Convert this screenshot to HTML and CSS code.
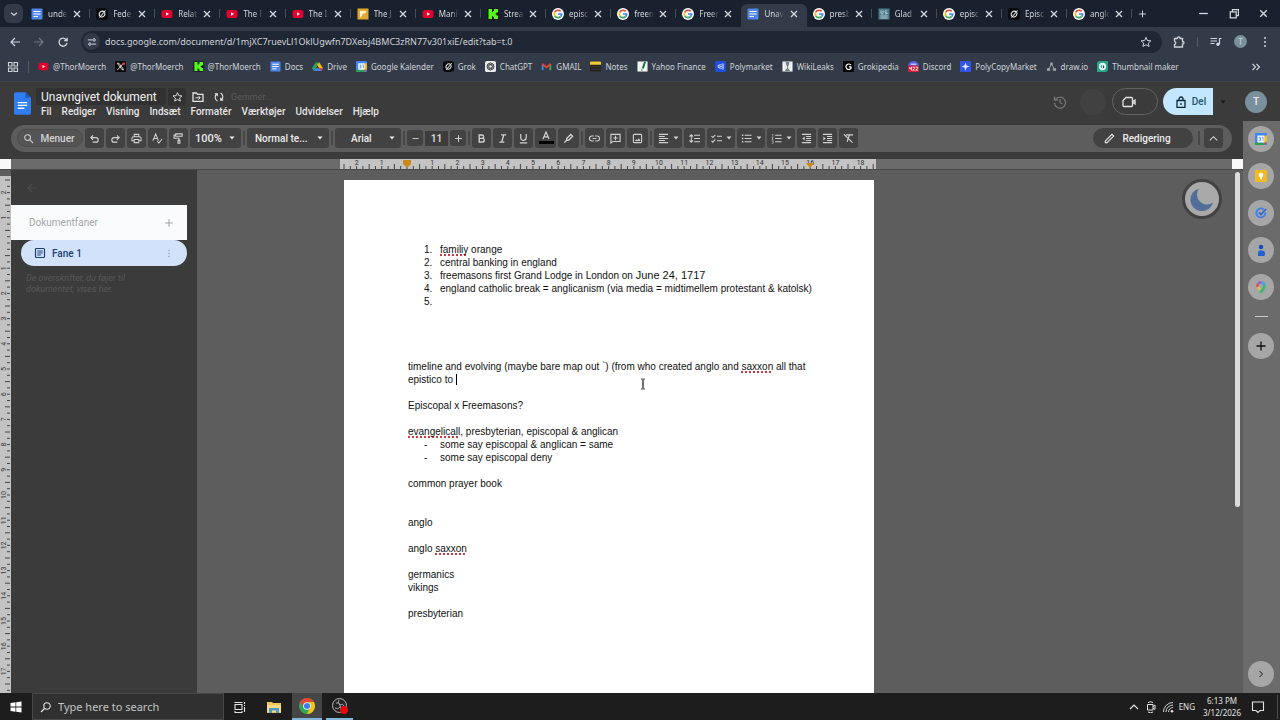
FILE: index.html
```html
<!DOCTYPE html>
<html lang="da">
<head>
  <meta charset="UTF-8" />
  <meta name="viewport" content="width=device-width, initial-scale=1.0" />
  <title>Unavngivet dokument</title>
  <link rel="stylesheet" href="styles.css">
</head>
<body>
  <svg class="sprite" aria-hidden="true">
    <symbol id="docs" viewBox="0 0 12 12"><rect x=".5" y=".5" width="11" height="11" rx="1" fill="#4f86e8"/><path d="M2.500 3.500h7M2.500 6h7M2.500 8.500h4.500" stroke="#fff" stroke-width="1.200"/></symbol>
    <symbol id="grok" viewBox="0 0 12 12"><rect width="12" height="12" rx="3" fill="#080a0c"/><path d="M8.300 3.800A3.200 3.200 0 0 0 3.800 8.200M4.200 8.500A3.200 3.200 0 0 0 8.700 4.500M3.500 9.500l6-7" fill="none" stroke="#e4e6e8" stroke-width="1.100"/></symbol>
    <symbol id="yt" viewBox="0 0 12 12"><rect x=".5" y="2" width="11" height="8" rx="2" fill="#e0032f"/><path d="M5 4.300v3.400L8 6z" fill="#fff"/></symbol>
    <symbol id="flag" viewBox="0 0 12 12"><rect x=".5" y=".5" width="11" height="11" fill="#e3a92d"/><path d="M3 10V3h6.500L8 5.500H5.500V7z" fill="#fff3d0"/></symbol>
    <symbol id="kick" viewBox="0 0 12 12"><rect x=".5" y=".5" width="11" height="11" fill="#0b120b"/><path d="M1.500 1h3.500v3h1V3h1V1h4v3.500H9.500v1h-1v1h1v1H11V11H7V9H6V8H5v3H1.500z" fill="#53fc18"/></symbol>
    <symbol id="google" viewBox="0 0 12 12"><circle cx="6" cy="6" r="6" fill="#fff"/><g fill="none" stroke-width="1.700"><path d="M8.600 3.300A3.700 3.700 0 0 0 2.800 4.100" stroke="#ea4335"/><path d="M2.800 4.100a3.700 3.700 0 0 0 0 3.800" stroke="#fbbc05"/><path d="M2.800 7.900a3.700 3.700 0 0 0 5.700.8" stroke="#34a853"/><path d="M6 6h3.700a3.700 3.700 0 0 1-1.200 2.700" stroke="#4285f4"/></g></symbol>
    <symbol id="us" viewBox="0 0 12 12"><rect x=".5" y=".5" width="11" height="11" fill="#4d7d8b"/><path d="M3 2.500v3q1 1.500 2 0v-3M9 3q-2-1-2 .5t2 1.500-2 1.200M2.500 8h7M2.500 10h7" fill="none" stroke="#c9dde2" stroke-width=".8"/></symbol>
    <symbol id="x" viewBox="0 0 12 12"><rect width="12" height="12" rx="1" fill="#0a0a0a"/><path d="M2.500 2.500h1.800l5.200 7H7.700z" fill="none" stroke="#ddd"/><path d="M9.500 2 2.500 10" stroke="#ddd"/><circle cx="9.500" cy="3" r="1.500" fill="#d3343c"/></symbol>
    <symbol id="drive" viewBox="0 0 12 12"><path d="M4 1.500h4L6 5z" fill="#34a853"/><path d="M4 1.500 0 8l2 3 4-6z" fill="#2fa35c"/><path d="m8 1.500 4 6.500H8L5.500 4z" fill="#fbbc05"/><path d="M12 8 10 11H2l2-3z" fill="#4285f4"/><path d="M8 8h4l-2 3z" fill="#ea4335"/></symbol>
    <symbol id="cal" viewBox="0 0 12 12"><rect width="12" height="12" rx="1" fill="#4285f4"/><path d="M9.500 2.500H12v7H9.500z" fill="#fbbc04"/><path d="M0 9.500h9.500V12H1a1 1 0 0 1-1-1z" fill="#2ea052"/><path d="M9.500 9.500H12L9.500 12z" fill="#ea4335"/><path d="M2.500 2.500h7v7h-7z" fill="#fff"/><path d="M3.700 4.300h1.700v3.500H3.700M4 6h1.400M7 4.500l1-.4v3.900" fill="none" stroke="#4285f4" stroke-width=".8"/></symbol>
    <symbol id="gpt" viewBox="0 0 12 12"><rect width="12" height="12" rx="2" fill="#e9ebec"/><g fill="none" stroke="#444" stroke-width=".8"><circle cx="6" cy="6" r="3.800"/><ellipse cx="6" cy="6" rx="4" ry="1.800" transform="rotate(30 6 6)"/><ellipse cx="6" cy="6" rx="4" ry="1.800" transform="rotate(-30 6 6)"/><ellipse cx="6" cy="6" rx="1.800" ry="4"/></g></symbol>
    <symbol id="gmail" viewBox="0 0 12 12"><path d="M1.800 10V4" stroke="#4285f4" stroke-width="2"/><path d="M10.200 10V4" stroke="#34a853" stroke-width="2"/><path d="m1.300 3 4.700 4 4.700-4" fill="none" stroke="#ea4335" stroke-width="2"/></symbol>
    <symbol id="notes" viewBox="0 0 12 12"><rect y=".5" width="12" height="11" rx="1" fill="#25241f"/><path d="M0 4V1.500q0-1 1-1h10q1 0 1 1V4z" fill="#f4ca35"/><path d="M1 6.500h10M1 9h10" stroke="#484842" stroke-width=".6"/></symbol>
    <symbol id="yahoo" viewBox="0 0 12 12"><path d="M.5.500h11v11H.5z" fill="#f2f5f2"/><path d="M8.800 1 6.300 8M4.800 9.500h1" stroke="#146b35" stroke-width="2"/></symbol>
    <symbol id="poly" viewBox="0 0 12 12"><rect width="12" height="12" rx="2" fill="#1f4fda"/><path d="m9 3-5.500 1.800v2.400L9 9zM3.500 4.800 9 7M3.500 7.200 9 5" fill="none" stroke="#dbe4ff" stroke-width=".8"/></symbol>
    <symbol id="wiki" viewBox="0 0 12 12"><path d="M.5.500h11v11H.5z" fill="#e8ecec"/><path d="M4 1h4L7.500 4 6.500 6v2L9 11H3l2.500-3V6L4.500 4z" fill="#708184"/><path d="M1 1v8l2 2zM11 1v8l-2 2z" fill="#fff"/></symbol>
    <symbol id="grokipedia" viewBox="0 0 12 12"><path d="M0 0h12v12H0z" fill="#060606"/><path d="M8.700 4.500A3 3 0 1 0 8.700 8V6.500H6.500" fill="none" stroke="#fff" stroke-width="1.300"/></symbol>
    <symbol id="discord" viewBox="0 0 12 12"><circle cx="6" cy="6" r="6" fill="#5463e8"/><path d="M3 3.500h6" stroke="#fff"/><rect y="5" width="12" height="7" rx="1" fill="#d51c39"/><path d="M2 6.500v2h2M3.700 6.300v4M5 6.700h2v1.600L5 10h2.200M8.300 6.700h2v1.600L8.300 10h2.500" fill="none" stroke="#fff" stroke-width=".9"/></symbol>
    <symbol id="spark" viewBox="0 0 12 12"><rect width="12" height="12" rx="1" fill="#3454e5"/><path d="m6 1.500 1.200 3.300L10.500 6 7.200 7.200 6 10.500 4.800 7.200 1.500 6l3.300-1.200z" fill="#dfe6ff"/></symbol>
    <symbol id="drawio" viewBox="0 0 12 12"><path d="M6 3 3 9M6 3l3 6" stroke="#a2a6ab"/><path d="M4.700 1.500h2.600v3H4.700zM1 8h3.500v2.500H1zM7.500 8H11v2.500H7.500z" fill="#a2a6ab"/></symbol>
    <symbol id="thumb" viewBox="0 0 12 12"><path d="M2 0h10v10l-2 2H0V2z" fill="#2aa386"/><circle cx="6" cy="6" r="3" fill="none" stroke="#e8fff8" stroke-width="2"/><path d="M6 4v4h2" stroke="#e8fff8"/></symbol>
    <symbol id="close" viewBox="0 0 12 12"><path d="m3 3 6 6M9 3 3 9" stroke="currentColor" stroke-width="1.300"/></symbol>
    <symbol id="plus" viewBox="0 0 12 12"><path d="M6 1.500v9M1.500 6h9" stroke="currentColor" stroke-width="1.300"/></symbol>
    <symbol id="minus" viewBox="0 0 12 12"><path d="M2 6h8" stroke="currentColor" stroke-width="1.200"/></symbol>
    <symbol id="down" viewBox="0 0 12 12"><path d="m2.500 4.500 3.500 3 3.500-3" fill="none" stroke="currentColor" stroke-width="1.500"/></symbol>
    <symbol id="up" viewBox="0 0 12 12"><path d="m2 8 4-4 4 4" fill="none" stroke="currentColor" stroke-width="1.200"/></symbol>
    <symbol id="right" viewBox="0 0 12 12"><path d="m4.500 3 3 3-3 3" fill="none" stroke="currentColor"/></symbol>
    <symbol id="caret" viewBox="0 0 6 6"><path d="M.5 1.500h5L3 4.500z" fill="currentColor"/></symbol>
    <symbol id="back" viewBox="0 0 12 12"><path d="M11 6H2M6 2 2 6l4 4" fill="none" stroke="currentColor" stroke-width="1.200"/></symbol>
    <symbol id="reload" viewBox="0 0 12 12"><path d="M9.700 4.500A4 4 0 1 0 10 7M10.200 1.700v3H7.200" fill="none" stroke="currentColor" stroke-width="1.300"/></symbol>
    <symbol id="tune" viewBox="0 0 12 12"><g fill="none" stroke="currentColor" stroke-width="1.200"><path d="M1 3.500h5M6 8.500h5"/><circle cx="8.500" cy="3.500" r="1.500"/><circle cx="3.500" cy="8.500" r="1.500"/></g></symbol>
    <symbol id="star" viewBox="0 0 12 12"><path d="m6 1.300 1.400 3.200 3.500.3-2.600 2.300.8 3.400L6 8.700l-3.100 1.800.8-3.400L1.100 4.800l3.500-.3z" fill="none" stroke="currentColor"/></symbol>
    <symbol id="puzzle" viewBox="0 0 12 12"><path d="M1.500 2.500h2.700q0-1.500 1.500-1.500t1.500 1.500H9.500V5.500q1.500 0 1.500 1.300T9.500 8.200V11h-8V8.500q1.300-.2 1.300-1.600T1.500 5.300z" fill="none" stroke="currentColor" stroke-width="1.300"/></symbol>
    <symbol id="queue" viewBox="0 0 12 12"><path d="M.5 2.500h6.500M.5 5h6.500M.5 7.500h4M9.500 8V2.500h2" fill="none" stroke="currentColor" stroke-width="1.200"/><circle cx="8" cy="8.300" r="1.700" fill="currentColor"/></symbol>
    <symbol id="dots" viewBox="0 0 12 12"><g fill="currentColor"><circle cx="6" cy="2" r="1"/><circle cx="6" cy="6" r="1"/><circle cx="6" cy="10" r="1"/></g></symbol>
    <symbol id="apps" viewBox="0 0 12 12"><path d="M1.500 1.500H5V5H1.500zM7 1.500h3.500V5H7zM1.500 7H5v3.500H1.500zM7 7h3.500v3.500H7z" fill="none" stroke="currentColor" stroke-width="1.100"/></symbol>
    <symbol id="max" viewBox="0 0 12 12"><path d="M3 4.500h5.500V10H3zM5 4.500v-2h5.500V8h-2" fill="none" stroke="currentColor" stroke-width="1.100"/></symbol>
    <symbol id="more" viewBox="0 0 12 12"><path d="m2.500 3 3 3-3 3M6.500 3l3 3-3 3" fill="none" stroke="currentColor" stroke-width="1.100"/></symbol>
    <symbol id="folder" viewBox="0 0 12 12"><path d="M1 2h3.500l1 1.300H11v7H1z" fill="none" stroke="currentColor" stroke-width="1.300"/><path d="M3.500 6.800H8M6.500 5 8.200 6.800 6.500 8.500" fill="none" stroke="currentColor"/></symbol>
    <symbol id="sync" viewBox="0 0 12 12"><path d="M4.500 10A4.200 4.200 0 0 1 3.700 3M1.800 2.700h2.500v2.500M7.500 2a4.200 4.200 0 0 1 .8 7M10.200 9.300H7.700V6.800" fill="none" stroke="currentColor" stroke-width="1.100"/></symbol>
    <symbol id="search" viewBox="0 0 12 12"><circle cx="5" cy="5" r="3.200" fill="none" stroke="currentColor" stroke-width="1.100"/><path d="m7.500 7.500 3.500 3.500" stroke="currentColor" stroke-width="1.200"/></symbol>
    <symbol id="undo" viewBox="0 0 12 12"><path d="M4.500 2.500 2 5l2.500 2.500M2.500 5H7.500a2.500 2.500 0 0 1 0 5H4" fill="none" stroke="currentColor" stroke-width="1.200"/></symbol>
    <symbol id="print" viewBox="0 0 12 12"><path d="M3.500 4V1.500h5V4M3.500 8.500H1V6q0-2 2-2h6q2 0 2 2v2.500H8.500M3.500 7h5v3.500h-5z" fill="none" stroke="currentColor" stroke-width="1.100"/></symbol>
    <symbol id="spell" viewBox="0 0 12 12"><path d="M1 8.500 4 1l3 7.500M2 6h4M5.500 9l2 2L11 6.500" fill="none" stroke="currentColor" stroke-width="1.100"/></symbol>
    <symbol id="paint" viewBox="0 0 12 12"><path d="M3 1h7v2.600H3zM3 2.300H1.200v3.400h5.300V8M5.500 8h2v3.200h-2z" fill="none" stroke="currentColor" stroke-width="1.200"/></symbol>
    <symbol id="bold" viewBox="0 0 12 12"><path d="M3.500 2.200h3a1.800 1.800 0 0 1 0 3.600h-3zM3.500 5.800H7a2 2 0 0 1 0 4H3.500z" fill="none" stroke="currentColor" stroke-width="1.500"/></symbol>
    <symbol id="italic" viewBox="0 0 12 12"><path d="M4.500 2H10M2.500 10H8M7.300 2 5.200 10" fill="none" stroke="currentColor" stroke-width="1.500"/></symbol>
    <symbol id="under" viewBox="0 0 12 12"><path d="M3 1v4q0 3 3 3t3-3V1M2 10.800h8" fill="none" stroke="currentColor" stroke-width="1.300"/></symbol>
    <symbol id="color" viewBox="0 0 18 14"><path d="M6 8 9 1l3 7M7 5.800h4" fill="none" stroke="currentColor" stroke-width="1.200"/><path d="M2 10h15v3H2z" fill="#000"/></symbol>
    <symbol id="marker" viewBox="0 0 12 12"><path d="m4 6 4.500-4.500 2 2L6 8H4zM4 8l-2.500 2.500" fill="none" stroke="currentColor" stroke-width="1.500"/></symbol>
    <symbol id="link" viewBox="0 0 12 12"><path d="M5.300 3.300H3.200a2.700 2.700 0 0 0 0 5.400h2.100M6.700 3.300h2.100a2.700 2.700 0 0 1 0 5.400H6.700M4 6h4" fill="none" stroke="currentColor" stroke-width="1.200"/></symbol>
    <symbol id="comment" viewBox="0 0 12 12"><path d="M1 1.500h10v7.700H3L1 11zM6 3v5M3.500 5.500h5" fill="none" stroke="currentColor" stroke-width="1.200"/></symbol>
    <symbol id="image" viewBox="0 0 12 12"><rect x="1.500" y="1.500" width="9" height="9" rx="1" fill="none" stroke="currentColor" stroke-width="1.200"/><path d="m3 8.800 1.800-2 1.200 1 1.500-2L9.300 8.800z" fill="currentColor"/></symbol>
    <symbol id="align" viewBox="0 0 12 12"><path d="M1 1.500h10M1 3.800h6.500M1 6h10M1 8.200h6.500M1 10.500h10" stroke="currentColor" stroke-width="1.100"/></symbol>
    <symbol id="spacing" viewBox="0 0 12 12"><path d="M5.500 2.500H12M5.500 6H12M5.500 9.500H12M2.500 2v8M.5 4l2-2 2 2M.5 8l2 2 2-2" fill="none" stroke="currentColor" stroke-width="1.100"/></symbol>
    <symbol id="check" viewBox="0 0 12 12"><path d="M6.500 3.500H12M6.500 8.500H12M.5 3.500 2 5l2.700-3M.5 8.500 2 10l2.700-3" fill="none" stroke="currentColor" stroke-width="1.100"/></symbol>
    <symbol id="bullets" viewBox="0 0 12 12"><path d="M4 2.500h7.500M4 6h7.500M4 9.500h7.500" stroke="currentColor" stroke-width="1.200"/><path d="M1 2.500h1.500M1 6h1.500M1 9.500h1.500" stroke="currentColor" stroke-width="1.500"/></symbol>
    <symbol id="numbers" viewBox="0 0 12 12"><path d="M4.500 2.500h7M4.500 6h7M4.500 9.500h7" stroke="currentColor" stroke-width="1.200"/><path d="M1 1.500h1v2.300M.8 5h1.500L1 7h1.500M1 8.500h1.300v2.700H1" fill="none" stroke="currentColor" stroke-width=".7"/></symbol>
    <symbol id="outdent" viewBox="0 0 12 12"><path d="M1 1.500h10M5.500 3.800H11M5.500 6H11M5.500 8.200H11M1 10.500h10" stroke="currentColor" stroke-width="1.100"/><path d="M4 3.800v4.500L1.500 6z" fill="currentColor"/></symbol>
    <symbol id="indent" viewBox="0 0 12 12"><path d="M1 1.500h10M5.500 3.800H11M5.500 6H11M5.500 8.200H11M1 10.500h10" stroke="currentColor" stroke-width="1.100"/><path d="M1.500 3.800v4.500L4 6z" fill="currentColor"/></symbol>
    <symbol id="clear" viewBox="0 0 12 12"><path d="M3 2h8M7 2 4.500 9.500M1 1.500l9.500 9" stroke="currentColor" stroke-width="1.300"/></symbol>
    <symbol id="pencil" viewBox="0 0 12 12"><path d="M1.500 10.500V8.700L8.700 1.500l1.800 1.800-7.200 7.200z" fill="none" stroke="currentColor" stroke-width="1.200"/></symbol>
    <symbol id="history" viewBox="0 0 14 14"><path d="M2.500 4.500A5.500 5.500 0 1 1 1.500 8M1.500 1.500v3.500H5M7 4v3.500l2.500 1.500" fill="none" stroke="currentColor" stroke-width="1.300"/></symbol>
    <symbol id="camera" viewBox="0 0 14 12"><path d="M4 1.500h5.500q1 0 1 1v7q0 1-1 1H2q-1 0-1-1v-5zM10.500 6l2.500-2v4z" fill="none" stroke="currentColor" stroke-width="1.300"/></symbol>
    <symbol id="lock" viewBox="0 0 12 12"><path d="M2 4.500h8v6.800H2zM4 4.500V3a2 2 0 0 1 4 0v1.500M6 7v2" fill="none" stroke="currentColor" stroke-width="1.300"/></symbol>
    <symbol id="tabicon" viewBox="0 0 12 12"><rect x="1.500" y="1.500" width="9" height="9" rx="1" fill="none" stroke="currentColor" stroke-width="1.200"/><path d="M3.300 4h5.400M3.300 6h5.400M3.300 8h3.600" stroke="currentColor"/></symbol>
    <symbol id="keep" viewBox="0 0 12 12"><rect width="12" height="12" rx="1" fill="#f0bb22"/><circle cx="6" cy="5" r="2.300" fill="#fff"/><path d="M5 7h2v2.300H5z" fill="#fff"/></symbol>
    <symbol id="tasks" viewBox="0 0 12 12"><path d="M8.500 2.300A4.500 4.500 0 1 0 10.300 5.500" fill="none" stroke="#3e7fe8" stroke-width="1.800"/><path d="m4 5.500 2 2L11 2" fill="none" stroke="#2b68d6" stroke-width="1.800"/></symbol>
    <symbol id="person" viewBox="0 0 12 12"><circle cx="6" cy="3" r="2.300" fill="#1a4fb5"/><path d="M3 12V8.500Q3 6.500 5 6.500h2q3 0 3 3V11l-1 1z" fill="#2260d8"/></symbol>
    <symbol id="maps" viewBox="0 0 12 12"><g fill="none" stroke-width="2.600"><path d="M2.800 6A3.500 3.500 0 0 1 3 2.800" stroke="#e0484a"/><path d="M3 2.800A3.500 3.500 0 0 1 6.500 1.500" stroke="#9a5bd0"/><path d="M6.500 1.500q2.700.5 3 3" stroke="#35a7d8"/><path d="M9.500 4.500Q9.500 7 5.500 11.500" stroke="#31bd63"/><path d="M2.800 6 5 8.500" stroke="#e5c33c"/></g></symbol>
    <symbol id="taskview" viewBox="0 0 12 12"><path d="M1 3.500h7v5H1zM1 1v1M8 1v1M1 10v1.500h7V10M1 1.500h7M10.500 1v2M10.500 6v5M10.500 4v1" fill="none" stroke="currentColor" stroke-width="1.100"/></symbol>
    <symbol id="explorer" viewBox="0 0 16 14"><path d="M1 2h5l1 1h8v10H1z" fill="#efc758"/><path d="M1 5h14v7H1z" fill="#fadb83"/><path d="M3 13V8h10v5h-3v-2.500H6V13z" fill="#4e9acb"/></symbol>
    <symbol id="chrome" viewBox="0 0 16 16"><circle cx="8" cy="8" r="8" fill="#35a853"/><path d="M1.100 4A8 8 0 0 1 14.900 4H8L5 9.500z" fill="#e84335"/><path d="M14.900 4A8 8 0 0 1 8 16l4-8-2-4z" fill="#fbc116"/><circle cx="8" cy="8" r="3.800" fill="#fff"/><circle cx="8" cy="8" r="3" fill="#3c7de6"/></symbol>
    <symbol id="obs" viewBox="0 0 16 16"><circle cx="7.500" cy="7.500" r="7" fill="#242424" stroke="#b5b5b5"/><path d="M7 2q-2 3 1 5 3-2 4 1M3 10q3 2 5-1M8 7q0 5 3 6M4 5q3-1 4 2" fill="none" stroke="#a5a5a5"/><circle cx="12" cy="12" r="4" fill="#e50914"/></symbol>
    <symbol id="windows" viewBox="0 0 12 12"><path d="M.5 2 5.500 1.300v4.300h-5zM6.200 1.200 11.500.5v5.100H6.200zM.5 6.400h5v4.300L.5 10zM6.200 6.400h5.300v5.100L6.200 10.800z" fill="#fff"/></symbol>
    <symbol id="rec" viewBox="0 0 12 12"><path d="M2.500 3.500h5.500v5.500H2.500zM8 5.500l2-1.500v4.500L8 7M3 1.500q2.500-1.500 5 0M3 11q2.500 1.500 5 0" fill="none" stroke="currentColor"/></symbol>
    <symbol id="wifi" viewBox="0 0 12 12"><path d="M1.500 11A9.500 9.500 0 0 1 11 1.500M4 11a7 7 0 0 1 7-7M6.500 11A4.500 4.500 0 0 1 11 6.500" fill="none" stroke="currentColor" stroke-width=".9"/><circle cx="10" cy="10.200" r="1.300" fill="currentColor"/></symbol>
    <symbol id="notify" viewBox="0 0 14 14"><path d="M1.500 2h11v8.500H9l-2 2-2-2H1.500z" fill="none" stroke="currentColor" stroke-width="1.100"/></symbol>
    <symbol id="moon" viewBox="0 0 24 24"><path d="M9 1.500A11.500 11.500 0 1 0 23 15.500 10 10 0 0 1 9 1.500z" fill="#526e98"/></symbol>
  </svg>

  <div class="tabstrip">
    <button class="tab-search" aria-label="Search tabs"><svg><use href="#down"/></svg></button>
    <div class="tabs">
      <div class="tab"><svg><use href="#docs"/></svg><span>unde</span><button aria-label="Close"><svg><use href="#close"/></svg></button></div>
      <div class="tab"><svg><use href="#grok"/></svg><span>Fede</span><button aria-label="Close"><svg><use href="#close"/></svg></button></div>
      <div class="tab"><svg><use href="#yt"/></svg><span>Relat</span><button aria-label="Close"><svg><use href="#close"/></svg></button></div>
      <div class="tab"><svg><use href="#yt"/></svg><span>The F</span><button aria-label="Close"><svg><use href="#close"/></svg></button></div>
      <div class="tab"><svg><use href="#yt"/></svg><span>The I</span><button aria-label="Close"><svg><use href="#close"/></svg></button></div>
      <div class="tab"><svg><use href="#flag"/></svg><span>The J</span><button aria-label="Close"><svg><use href="#close"/></svg></button></div>
      <div class="tab"><svg><use href="#yt"/></svg><span>Mani</span><button aria-label="Close"><svg><use href="#close"/></svg></button></div>
      <div class="tab"><svg><use href="#kick"/></svg><span>Strea</span><button aria-label="Close"><svg><use href="#close"/></svg></button></div>
      <div class="tab"><svg><use href="#google"/></svg><span>episc</span><button aria-label="Close"><svg><use href="#close"/></svg></button></div>
      <div class="tab"><svg><use href="#google"/></svg><span>freem</span><button aria-label="Close"><svg><use href="#close"/></svg></button></div>
      <div class="tab before"><svg><use href="#google"/></svg><span>Freem</span><button aria-label="Close"><svg><use href="#close"/></svg></button></div>
      <div class="tab active"><svg><use href="#docs"/></svg><span>Unav</span><button aria-label="Close"><svg><use href="#close"/></svg></button></div>
      <div class="tab"><svg><use href="#google"/></svg><span>presb</span><button aria-label="Close"><svg><use href="#close"/></svg></button></div>
      <div class="tab"><svg><use href="#us"/></svg><span>Glad</span><button aria-label="Close"><svg><use href="#close"/></svg></button></div>
      <div class="tab"><svg><use href="#google"/></svg><span>episc</span><button aria-label="Close"><svg><use href="#close"/></svg></button></div>
      <div class="tab"><svg><use href="#grok"/></svg><span>Episc</span><button aria-label="Close"><svg><use href="#close"/></svg></button></div>
      <div class="tab"><svg><use href="#google"/></svg><span>anglo</span><button aria-label="Close"><svg><use href="#close"/></svg></button></div>
    </div>
    <button class="new-tab" aria-label="New tab"><svg><use href="#plus"/></svg></button>
    <div class="window-controls">
      <button aria-label="Minimize"><svg><use href="#minus"/></svg></button>
      <button aria-label="Restore"><svg><use href="#max"/></svg></button>
      <button aria-label="Close window"><svg><use href="#close"/></svg></button>
    </div>
  </div>

  <div class="navbar">
    <button aria-label="Back"><svg><use href="#back"/></svg></button>
    <button class="forward" aria-label="Forward"><svg><use href="#back"/></svg></button>
    <button aria-label="Reload"><svg><use href="#reload"/></svg></button>
    <div class="omnibox">
      <button class="site-info" aria-label="Site information"><svg><use href="#tune"/></svg></button>
      <input type="text" aria-label="Address" value="docs.google.com/document/d/1mjXC7ruevLl1OklUgwfn7DXebj4BMC3zRN77v301xiE/edit?tab=t.0">
      <button aria-label="Bookmark"><svg><use href="#star"/></svg></button>
    </div>
    <div class="nav-right">
      <button aria-label="Extensions"><svg><use href="#puzzle"/></svg></button>
      <i class="nav-sep"></i>
      <button aria-label="Media"><svg><use href="#queue"/></svg></button>
      <button class="profile">T</button>
      <button aria-label="Menu"><svg><use href="#dots"/></svg></button>
    </div>
  </div>

  <nav class="bookmarks">
    <button class="apps" aria-label="Tab groups"><svg><use href="#apps"/></svg></button>
    <a href="#"><svg><use href="#yt"/></svg>@ThorMoerch</a>
    <a href="#"><svg><use href="#x"/></svg>@ThorMoerch</a>
    <a href="#"><svg><use href="#kick"/></svg>@ThorMoerch</a>
    <a href="#"><svg><use href="#docs"/></svg>Docs</a>
    <a href="#"><svg><use href="#drive"/></svg>Drive</a>
    <a href="#"><svg><use href="#cal"/></svg>Google Kalender</a>
    <a href="#"><svg><use href="#grok"/></svg>Grok</a>
    <a href="#"><svg><use href="#gpt"/></svg>ChatGPT</a>
    <a href="#"><svg><use href="#gmail"/></svg>GMAIL</a>
    <a href="#"><svg><use href="#notes"/></svg>Notes</a>
    <a href="#"><svg><use href="#yahoo"/></svg>Yahoo Finance</a>
    <a href="#"><svg><use href="#poly"/></svg>Polymarket</a>
    <a href="#"><svg><use href="#wiki"/></svg>WikiLeaks</a>
    <a href="#"><svg><use href="#grokipedia"/></svg>Grokipedia</a>
    <a href="#"><svg><use href="#discord"/></svg>Discord</a>
    <a href="#"><svg><use href="#spark"/></svg>PolyCopyMarket</a>
    <a href="#"><svg><use href="#drawio"/></svg>draw.io</a>
    <a href="#"><svg><use href="#thumb"/></svg>Thumbnail maker</a>
    <button class="overflow" aria-label="More bookmarks"><svg><use href="#more"/></svg></button>
  </nav>

  <header class="docs-header">
    <svg class="docs-logo" viewBox="0 0 18 24"><path d="M2 0h10l6 6v16q0 2-2 2H2q-2 0-2-2V2Q0 0 2 0z" fill="#2f7df0"/><path d="M12 0l6 6h-6z" fill="#1859c4"/><path d="M4 11h10M4 14h10M4 17h7" stroke="#fff" stroke-width="1.400"/></svg>
    <div class="heading">
      <div class="title-row">
        <input class="doc-title" type="text" aria-label="Title" value="Unavngivet dokument">
        <button class="title-star" aria-label="Star"><svg><use href="#star"/></svg></button>
        <button aria-label="Move"><svg><use href="#folder"/></svg></button>
        <svg class="sync"><use href="#sync"/></svg>
        <span class="saving">Gemmer...</span>
      </div>
      <div class="menus">
        <button>Fil</button><button>Rediger</button><button>Visning</button><button>Indsæt</button><button>Formatér</button><button>Værktøjer</button><button>Udvidelser</button><button>Hjælp</button>
      </div>
    </div>
    <div class="header-actions">
      <button class="history" aria-label="History"><svg><use href="#history"/></svg></button>
      <span class="ghost"></span>
      <button class="meet" aria-label="Meet"><svg><use href="#camera"/></svg></button>
      <button class="share"><svg><use href="#lock"/></svg>Del</button>
      <button class="share-more" aria-label="Share options"><svg><use href="#caret"/></svg></button>
      <button class="avatar">T</button>
    </div>
  </header>

  <div class="workspace">
    <div class="editor">
      <div class="toolbar">
        <button class="menu-search"><svg><use href="#search"/></svg>Menuer</button>
        <button aria-label="Undo"><svg><use href="#undo"/></svg></button>
        <button class="redo" aria-label="Redo"><svg><use href="#undo"/></svg></button>
        <button aria-label="Print"><svg><use href="#print"/></svg></button>
        <button aria-label="Spelling"><svg><use href="#spell"/></svg></button>
        <button aria-label="Paint format"><svg><use href="#paint"/></svg></button>
        <label class="pick zoom"><select aria-label="Zoom"><option>100%</option></select><svg><use href="#caret"/></svg></label>
        <i></i>
        <label class="pick style"><select aria-label="Style"><option>Normal te...</option></select><svg><use href="#caret"/></svg></label>
        <i></i>
        <label class="pick font"><select aria-label="Font"><option>Arial</option></select><svg><use href="#caret"/></svg></label>
        <i></i>
        <button class="small" aria-label="Smaller"><svg><use href="#minus"/></svg></button>
        <input class="size" type="text" aria-label="Font size" value="11">
        <button class="small" aria-label="Larger"><svg><use href="#plus"/></svg></button>
        <i></i>
        <button aria-label="Bold"><svg><use href="#bold"/></svg></button>
        <button aria-label="Italic"><svg><use href="#italic"/></svg></button>
        <button aria-label="Underline"><svg><use href="#under"/></svg></button>
        <button class="wide color" aria-label="Text color"><svg><use href="#color"/></svg></button>
        <button class="wide" aria-label="Highlight"><svg><use href="#marker"/></svg></button>
        <i></i>
        <button aria-label="Link"><svg><use href="#link"/></svg></button>
        <button aria-label="Comment"><svg><use href="#comment"/></svg></button>
        <button class="wide" aria-label="Image"><svg><use href="#image"/></svg></button>
        <i></i>
        <button class="menu" aria-label="Align"><svg><use href="#align"/></svg><svg class="caret"><use href="#caret"/></svg></button>
        <button class="wide" aria-label="Line spacing"><svg><use href="#spacing"/></svg></button>
        <button class="menu" aria-label="Checklist"><svg><use href="#check"/></svg><svg class="caret"><use href="#caret"/></svg></button>
        <button class="menu" aria-label="Bulleted list"><svg><use href="#bullets"/></svg><svg class="caret"><use href="#caret"/></svg></button>
        <button class="menu" aria-label="Numbered list"><svg><use href="#numbers"/></svg><svg class="caret"><use href="#caret"/></svg></button>
        <button aria-label="Decrease indent"><svg><use href="#outdent"/></svg></button>
        <button aria-label="Increase indent"><svg><use href="#indent"/></svg></button>
        <button aria-label="Clear formatting"><svg><use href="#clear"/></svg></button>
        <button class="mode"><svg><use href="#pencil"/></svg>Redigering</button>
        <i class="mode-sep"></i>
        <button class="collapse" aria-label="Hide menus"><svg><use href="#up"/></svg></button>
      </div>

      <div class="ruler-row">
        <span class="corner"></span>
        <div class="ruler-track"><svg id="hruler" class="hruler"></svg></div>
        <span class="corner"></span>
      </div>

      <div class="content">
        <div class="vtrack"><svg id="vruler" class="vruler"></svg></div>
        <aside class="outline">
          <button class="outline-back" aria-label="Back"><svg><use href="#back"/></svg></button>
          <div class="outline-head">Dokumentfaner<button aria-label="Add tab"><svg><use href="#plus"/></svg></button></div>
          <div class="outline-tab"><svg><use href="#tabicon"/></svg><span>Fane 1</span><button aria-label="Tab options"><svg><use href="#dots"/></svg></button></div>
          <p>De overskrifter, du føjer til dokumentet, vises her.</p>
        </aside>
        <main class="canvas">
          <article class="page">
            <ol>
              <li><u>familiy</u> orange</li>
              <li>central banking in england</li>
              <li>freemasons first Grand Lodge in London on <span class="date">June 24, 1717</span></li>
              <li>england catholic break = anglicanism (via media = midtimellem protestant &amp; katolsk)</li>
              <li></li>
            </ol>
            <br><br><br><br>
            <p>timeline and evolving (maybe bare map out `) (from who created anglo and <u>saxxon</u> all that epistico to <span class="text-caret"></span></p>
            <br>
            <p>Episcopal x Freemasons?</p>
            <br>
            <p><u>evangelicall</u>, presbyterian, episcopal &amp; anglican</p>
            <ul>
              <li>some say episcopal &amp; anglican = same</li>
              <li>some say episcopal deny</li>
            </ul>
            <br>
            <p>common prayer book</p>
            <br><br>
            <p>anglo</p>
            <br>
            <p>anglo <u>saxxon</u></p>
            <br>
            <p>germanics</p>
            <p>vikings</p>
            <br>
            <p>presbyterian</p>
            <svg class="ibeam" viewBox="0 0 6 12"><path d="M1 1h1.500q.5 0 .5.500v9q0 .5-.5.500H1M5 1H3.500q-.5 0-.5.500v9q0 .5.500.5H5" fill="none" stroke="#444"/></svg>
          </article>
          <button class="dark-toggle" aria-label="Dark mode"><svg><use href="#moon"/></svg></button>
          <span class="scroll-thumb"></span>
        </main>
      </div>
    </div>

    <aside class="side-panel">
      <button aria-label="Calendar"><svg><use href="#cal"/></svg></button>
      <button aria-label="Keep"><svg><use href="#keep"/></svg></button>
      <button aria-label="Tasks"><svg><use href="#tasks"/></svg></button>
      <button aria-label="Contacts"><svg><use href="#person"/></svg></button>
      <button aria-label="Maps"><svg><use href="#maps"/></svg></button>
      <hr>
      <button aria-label="Add-ons"><svg><use href="#plus"/></svg></button>
      <button class="hide-panel" aria-label="Hide side panel"><svg><use href="#right"/></svg></button>
    </aside>
  </div>

  <footer class="taskbar">
    <button class="start" aria-label="Start"><svg><use href="#windows"/></svg></button>
    <label class="task-search"><svg><use href="#search"/></svg><input type="text" aria-label="Search" placeholder="Type here to search"></label>
    <button aria-label="Task view"><svg><use href="#taskview"/></svg></button>
    <button class="app" aria-label="Explorer"><svg><use href="#explorer"/></svg></button>
    <button class="app focused" aria-label="Chrome"><svg><use href="#chrome"/></svg></button>
    <button class="app running" aria-label="OBS"><svg><use href="#obs"/></svg></button>
    <div class="tray">
      <svg><use href="#up"/></svg>
      <svg><use href="#rec"/></svg>
      <svg><use href="#wifi"/></svg>
      <span>ENG</span>
      <time>6:13 PM<br>3/12/2026</time>
      <button aria-label="Notifications"><svg><use href="#notify"/></svg></button>
    </div>
  </footer>
  <script src="script.js"></script>
</body>
</html>
```
FILE: styles.css
```css
* {
  box-sizing: border-box;
}
body {
  margin: 0;
  height: 100vh;
  display: flex;
  flex-direction: column;
  overflow: hidden;
  background: #3b3b3b;
  color: #e4e4e4;
  font-family: Roboto, "Liberation Sans", sans-serif;
  font-size: 10px;
}
button, input, select {
  font: inherit;
  color: inherit;
  background: none;
  border: 0;
  margin: 0;
  padding: 0;
  min-width: 0;
  outline: 0;
}
button {
  display: flex;
  align-items: center;
  justify-content: center;
  flex-shrink: 0;
}
svg {
  width: 12px;
  height: 12px;
  flex-shrink: 0;
  display: block;
}
.sprite {
  display: none;
}
a {
  color: inherit;
  text-decoration: none;
}

/* browser chrome */
.tabstrip, .navbar, .bookmarks, .taskbar {
  font-family: "Noto Sans", "Open Sans", sans-serif;
  display: flex;
  align-items: center;
  flex-shrink: 0;
}
.tabstrip {
  height: 27px;
  background: #19212e;
  color: #d5d8dd;
  font-size: 8px;
}
.tab-search {
  width: 19px;
  height: 19px;
  margin: 0 2px 0 4px;
  border-radius: 6px;
  background: #333b48;
}
.tab-search svg {
  width: 10px;
}
.tabs {
  flex: 1;
  display: flex;
  align-self: stretch;
  padding-top: 4px;
  min-width: 0;
}
.tab {
  flex: 1 1 0;
  min-width: 0;
  display: flex;
  align-items: center;
  padding: 0 7px 4px 6px;
  position: relative;
}
.tab span {
  width: 20px;
  margin-left: 5px;
  overflow: hidden;
  white-space: nowrap;
  -webkit-mask-image: linear-gradient(90deg, #000 60%, transparent);
  mask-image: linear-gradient(90deg, #000 60%, transparent);
}
.tab button {
  margin-left: auto;
}
.tab::after {
  content: "";
  position: absolute;
  right: 0;
  top: 5px;
  width: 1px;
  height: 9px;
  background: #444b58;
}
.tab.active {
  background: #333b48;
  border-radius: 6px 6px 0 0;
}
.tab.active::after, .tab.before::after {
  display: none;
}
.new-tab {
  width: 20px;
}
.new-tab svg {
  width: 9px;
}
.window-controls {
  display: flex;
  margin: 0 2px 0 36px;
}
.window-controls button {
  width: 30px;
}
.window-controls svg {
  width: 13px;
  height: 13px;
}
.navbar {
  height: 29px;
  padding-left: 3px;
  background: #333b48;
  color: #d0d4da;
}
.navbar > button {
  width: 24px;
}
.navbar > .forward {
  transform: scaleX(-1);
  color: #717985;
}
.omnibox {
  flex: 1;
  display: flex;
  align-items: center;
  height: 22px;
  margin-left: 6px;
  padding: 0 10px 0 2px;
  border-radius: 11px;
  background: #1f2734;
}
.omnibox .site-info {
  width: 17px;
  height: 17px;
  border-radius: 9px;
  background: #333b48;
}
.site-info svg {
  width: 10px;
}
.omnibox input {
  flex: 1;
  margin-left: 5px;
  font-size: 9px;
}
.nav-right {
  display: flex;
  align-items: center;
  gap: 12px;
  padding: 0 9px 0 11px;
}
.nav-sep {
  width: 1px;
  height: 10px;
  background: #535b67;
}
.profile {
  width: 13px;
  height: 13px;
  border-radius: 50%;
  background: #78909c;
  font-size: 8px;
}
.bookmarks {
  height: 25px;
  padding-bottom: 4px;
  background: #333b48;
  color: #d0d4da;
  font-size: 8px;
  gap: 9px;
}
.bookmarks a {
  display: flex;
  align-items: center;
  gap: 4px;
  white-space: nowrap;
}
.bookmarks a svg {
  width: 11px;
  height: 11px;
}
.apps {
  padding: 0 9px 0 7px;
  border-right: 1px solid #535b67;
}
.overflow {
  margin: 0 18px 0 auto;
}

/* docs header */
.docs-header {
  height: 40px;
  display: flex;
  flex-shrink: 0;
  padding: 6px 13px 0 14px;
  border-top: 1px solid #39444b;
}
.docs-logo {
  width: 17px;
  height: 23px;
  margin-top: 4px;
}
.heading {
  margin-left: 5px;
}
.title-row {
  display: flex;
  align-items: center;
  height: 17px;
}
.doc-title {
  width: 130px;
  height: 17px;
  padding-left: 5px;
  background: #313131;
  color: #f0f0f0;
  font-size: 12px;
  border-radius: 2px;
}
.title-star {
  width: 18px;
  height: 18px;
  margin: 0 6px 0 2px;
  border-radius: 3px;
  background: #313131;
}
.title-star svg {
  width: 11px;
}
.sync {
  margin: 0 6px 0 9px;
}
.saving {
  color: #5a5a5a;
  font-size: 9px;
}
.menus {
  display: flex;
  gap: 10px;
  padding-left: 5px;
  font-weight: 500;
  line-height: 14px;
}
.header-actions {
  display: flex;
  align-items: center;
  height: 27px;
  margin-left: auto;
}
.history {
  color: #747474;
}
.history svg {
  width: 14px;
  height: 14px;
}
.ghost {
  width: 26px;
  height: 26px;
  margin: 0 6px 0 13px;
  border-radius: 50%;
  background: #414141;
}
.meet {
  width: 46px;
  height: 27px;
  padding-right: 12px;
  border: 1px solid #626262;
  border-radius: 14px;
}
.meet svg {
  width: 14px;
}
.share {
  width: 50px;
  height: 27px;
  margin-left: 5px;
  padding-left: 5px;
  gap: 5px;
  border-radius: 14px 0 0 14px;
  background: #c2e7ff;
  color: #26566a;
  font-weight: 500;
}
.share svg {
  color: #0b2636;
}
.share-more {
  width: 20px;
  margin-right: 12px;
  color: #151515;
}
.share-more svg {
  width: 6px;
}
.avatar {
  width: 22px;
  height: 22px;
  border-radius: 50%;
  background: #78909c;
  font-size: 11px;
  font-weight: 500;
}

/* toolbar */
.workspace {
  flex: 1;
  display: flex;
  min-height: 0;
}
.editor {
  flex: 1;
  min-width: 0;
  display: flex;
  flex-direction: column;
}
.toolbar {
  display: flex;
  align-items: center;
  gap: 2px;
  height: 27px;
  flex-shrink: 0;
  margin: 4px 11px 7px;
  padding: 0 9px 1px 6px;
  border-radius: 14px;
  background: #5d5d5d;
  color: #d2d2d2;
}
.toolbar button {
  width: 19px;
  height: 20px;
  border-radius: 3px;
  background: #424242;
}
.toolbar svg {
  width: 11px;
  height: 11px;
}
.toolbar > i {
  width: 2px;
  height: 14px;
  background: #474747;
}
.toolbar .menu-search {
  width: 66px;
  height: 18px;
  padding-right: 2px;
  gap: 6px;
  border: 1px solid #4b4b4b;
  border-radius: 9px;
  background: #545454;
  font-weight: 500;
}
.toolbar .redo svg {
  transform: scaleX(-1);
}
.pick {
  display: flex;
  align-items: center;
  height: 20px;
  padding: 0 6px 0 5px;
  border-radius: 3px;
  background: #424242;
  color: #ececec;
  font-weight: 500;
}
.pick select {
  flex: 1;
  appearance: none;
}
.toolbar .pick svg, .toolbar .caret {
  width: 6px;
  height: 6px;
}
.zoom {
  width: 51px;
  font-size: 11px;
}
.style {
  width: 82px;
  padding-left: 8px;
}
.font {
  width: 66px;
  padding-left: 16px;
}
.toolbar .small {
  width: 16px;
  height: 16px;
}
.toolbar .small svg {
  width: 9px;
}
.size {
  width: 23px;
  height: 15px;
  text-align: center;
  font-weight: 700;
  background: #3d3d3d;
}
.toolbar .wide {
  width: 21px;
}
.toolbar .color svg {
  width: 18px;
  height: 14px;
}
.toolbar .menu {
  width: 28px;
  gap: 4px;
}
.toolbar .mode {
  width: 100px;
  margin-left: auto;
  padding-right: 11px;
  gap: 7px;
  border-radius: 10px;
  background: #424242;
  color: #ececec;
  font-weight: 500;
}
.toolbar .mode-sep {
  margin: 0 2px 0 3px;
}

/* rulers */
.ruler-row {
  display: flex;
  height: 10px;
  flex-shrink: 0;
  background: #6b6b6b;
}
.corner {
  width: 11px;
  background: #f8f8f8;
}
.ruler-track {
  flex: 1;
  padding-left: 329px;
}
.hruler {
  width: 536px;
  height: 10px;
  background: #c3c3c3;
}
.vtrack {
  width: 11px;
  flex-shrink: 0;
  padding-top: 6px;
}
.vruler {
  width: 11px;
  height: 100%;
  background: #c3c3c3;
}
.hruler text, .vruler text {
  font-size: 7px;
  fill: #333;
  text-anchor: middle;
}

/* content */
.content {
  flex: 1;
  display: flex;
  min-height: 0;
  border-top: 1px solid #4a4a4a;
  background: #5d5d5d;
}
.outline {
  width: 186px;
  flex-shrink: 0;
  padding-right: 10px;
  background: #3b3b3b;
}
.outline-back {
  margin: 12px 0 11px 15px;
  color: #4d4d4d;
}
.outline-head {
  display: flex;
  align-items: center;
  justify-content: space-between;
  height: 35px;
  padding: 0 13px 0 18px;
  background: #f9fbfd;
  color: #a3a6a8;
}
.outline-head svg {
  width: 10px;
  height: 10px;
}
.outline-tab {
  display: flex;
  align-items: center;
  height: 26px;
  margin-left: 10px;
  padding: 0 12px 0 13px;
  border-radius: 13px;
  background: #d3e2fb;
  color: #1d3f77;
  font-weight: 500;
}
.outline-tab span {
  margin-left: 6px;
}
.outline-tab button {
  margin-left: auto;
  color: #8ba0c2;
}
.outline-tab button svg {
  height: 9px;
}
.outline p {
  width: 120px;
  margin: 7px 0 0 15px;
  color: #575757;
  font-style: italic;
  font-size: 9px;
  line-height: 11px;
}
.canvas {
  flex: 1;
  position: relative;
  padding: 10px 0 0 147px;
  overflow: hidden;
}
.page {
  position: relative;
  width: 530px;
  height: 749px;
  padding: 63px 64px 0;
  background: #fff;
  color: #111;
  font-family: "Liberation Sans", Arial, sans-serif;
  font-size: 10px;
  line-height: 13px;
}
.page p, .page ol, .page ul {
  margin: 0;
}
.page ol, .page ul {
  padding-left: 32px;
  list-style: none;
  counter-reset: item;
}
.page li {
  display: flex;
  min-height: 13px;
  white-space: pre;
}
.page li::before {
  flex-shrink: 0;
  width: 16px;
  margin-left: -16px;
  content: "-";
}
.page ol li::before {
  counter-increment: item;
  content: counter(item) ".";
}
.page u {
  text-decoration: underline dotted #c63a46 2px;
  text-decoration-skip-ink: none;
  text-underline-offset: 1px;
}
.date {
  font-size: 11px;
}
.text-caret {
  display: inline-block;
  width: 1px;
  height: 11px;
  background: #000;
  vertical-align: -2px;
}
.ibeam {
  position: absolute;
  left: 296px;
  top: 198px;
  width: 6px;
}
.dark-toggle {
  position: absolute;
  right: 21px;
  top: 9px;
  width: 40px;
  height: 40px;
  border: 3px solid #424242;
  border-radius: 50%;
  background: #a9a9a9;
}
.dark-toggle svg {
  width: 24px;
  height: 24px;
}
.scroll-thumb {
  position: absolute;
  right: 3px;
  top: 2px;
  width: 5px;
  height: 335px;
  border-radius: 3px;
  background: #dcdcdc;
}

/* side panel */
.side-panel {
  width: 37px;
  display: flex;
  flex-direction: column;
  align-items: center;
  gap: 11px;
  padding: 5px 1px 6px 0;
  background: #6b6b6b;
  color: #111;
}
.side-panel button {
  width: 26px;
  height: 26px;
  border-radius: 50%;
  background: #a6a6a6;
}
.side-panel hr {
  width: 13px;
  height: 1px;
  margin: 5px 0;
  border: 0;
  background: #c8c8c8;
}
.side-panel .hide-panel {
  margin-top: auto;
}

/* taskbar */
.taskbar {
  height: 27px;
  background: #1d1d1d;
  color: #e2e2e2;
  font-size: 8px;
}
.taskbar > button {
  width: 32px;
  height: 27px;
}
.task-search {
  display: flex;
  align-items: center;
  width: 192px;
  height: 27px;
  padding-left: 7px;
  border: 1px solid #484848;
  background: #303030;
}
.task-search svg {
  transform: scaleX(-1);
}
.task-search input {
  flex: 1;
  margin-left: 6px;
  font-size: 11px;
}
.task-search input::placeholder {
  color: #c4c4c4;
}
.taskbar .app {
  width: 30px;
  margin-left: 3px;
}
.app svg {
  width: 16px;
  height: 16px;
}
.taskbar .focused {
  background: #464646;
  border-bottom: 2px solid #84b6dc;
}
.taskbar .running {
  width: 27px;
  margin-left: 4px;
  border-bottom: 2px solid #84b6dc;
}
.tray {
  display: flex;
  align-items: center;
  gap: 5px;
  margin-left: auto;
  margin-right: 2px;
  padding-right: 12px;
  border-right: 1px solid #4c4c4c;
}
.tray time {
  margin: 0 5px 0 3px;
  line-height: 12px;
  text-align: center;
}
.tray button svg {
  width: 14px;
  height: 14px;
}
```
FILE: script.js
```js
const CM = 25.2;
const NS = "http://www.w3.org/2000/svg";

function add(parent, name, attrs, text) {
  const el = document.createElementNS(NS, name);
  for (const key in attrs) el.setAttribute(key, attrs[key]);
  if (text !== undefined) el.textContent = text;
  parent.appendChild(el);
}

// Ticks sit every quarter centimetre, with the half marks taller
function drawRuler(svg, zero, length, vertical) {
  for (let q = -11; q < 80; q++) {
    const pos = zero + q * CM / 4;
    if (pos < 1 || pos > length) continue;
    const whole = q % 4 === 0;
    const size = q % 2 === 0 && !whole ? 5 : 3;
    const line = vertical
      ? { x1: 10 - size, x2: 10, y1: pos, y2: pos }
      : { y1: 10 - size, y2: 10, x1: pos, x2: pos };
    add(svg, "line", { ...line, stroke: "#444" });
    if (whole && q !== 0) {
      const n = Math.abs(q / 4);
      add(svg, "text", vertical
        ? { x: 0, y: 0, transform: `translate(6 ${pos}) rotate(-90)` }
        : { x: pos, y: 6 }, n);
    }
  }
}

const hruler = document.getElementById("hruler");
drawRuler(hruler, 67, 536, false);
add(hruler, "path", { d: "M63 1h8v4l-4 4-4-4z", fill: "#c98a1b" });
add(hruler, "path", { d: "M466 4h8l-4 5z", fill: "#c98a1b" });
drawRuler(document.getElementById("vruler"), 67, 900, true);
```
